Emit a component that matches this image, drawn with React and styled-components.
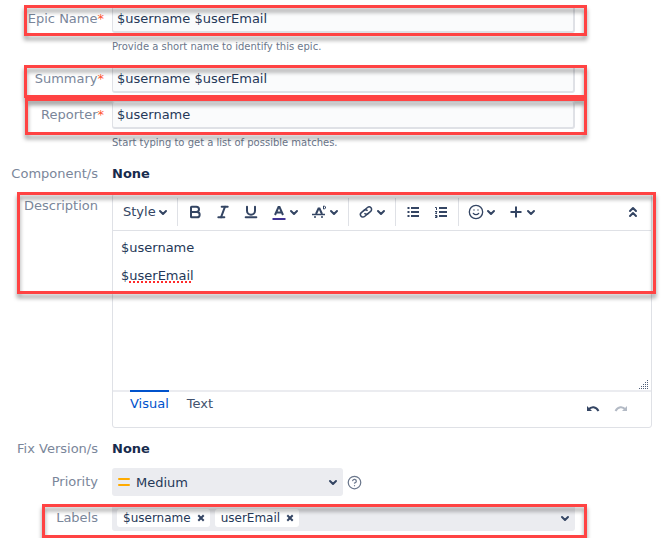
import React, { useState } from 'react';
import styled, { createGlobalStyle } from 'styled-components';
import { Bold, Italic, Underline, Smile, CircleHelp } from 'lucide-react';

const GlobalStyle = createGlobalStyle`
  * {
    box-sizing: border-box;
  }

  body {
    margin: 0;
    background: #fff;
    color: #253858;
    font-family: "DejaVu Sans", sans-serif;
    font-size: 13px;
  }

  button, input, select {
    font: inherit;
    color: inherit;
  }
`;

const Form = styled.form`
  display: flex;
  flex-direction: column;
  gap: 8px;
  padding: 5px 0 6px;
`;

const Row = styled.div`
  position: relative;
  display: grid;
  grid-template-columns: 98px minmax(0, 1fr);
  column-gap: 14px;
  padding-right: 13px;
`;

const Label = styled.label`
  padding-top: ${(props) => (props.$short ? '2px' : '0')};
  color: #7a869a;
  line-height: ${(props) => (props.$short ? '22px' : '28px')};
  text-align: right;
  white-space: nowrap;
`;

const Required = styled.span`
  margin-right: -6px;
  color: #ff5630;
`;

const Field = styled.div`
  display: flex;
  flex-direction: column;
  max-width: ${(props) => (props.$wide ? 'none' : '463px')};
`;

const TextInput = styled.input`
  width: 100%;
  height: 28px;
  padding: 0 4px;
  border: 1px solid #dfe1e6;
  border-bottom-width: 2px;
  border-right-width: 2px;
  border-radius: 3px;
  background: #fafbfc;
  outline: none;
`;

const Hint = styled.p`
  margin: 4px 0 0;
  color: #6b778c;
  font-size: 10px;
  line-height: 20px;
`;

const Value = styled.strong`
  padding-top: 2px;
  color: #172b4d;
  line-height: 22px;
`;

// Red frame that calls out a field
const Highlight = styled.div`
  position: absolute;
  top: ${(props) => props.$top}px;
  bottom: ${(props) => props.$bottom}px;
  left: ${(props) => props.$left}px;
  width: ${(props) => props.$width}px;
  border: 3px solid #ff4343;
  filter: drop-shadow(0 4px 2px rgba(0, 0, 0, 0.4));
  pointer-events: none;
`;

const Editor = styled.div`
  display: flex;
  flex-direction: column;
  width: 100%;
  border: 1px solid #dfe1e6;
  border-radius: 3px;
`;

const Toolbar = styled.div`
  display: flex;
  align-items: center;
  height: 37px;
  padding: 0 4px;
  border-bottom: 1px solid #dfe1e6;
  color: #344563;
`;

const ToolButton = styled.button`
  display: flex;
  align-items: center;
  gap: 2px;
  height: 28px;
  padding: 0 6px;
  border: 0;
  background: none;
  line-height: 28px;
`;

const CollapseButton = styled(ToolButton)`
  margin-left: auto;
`;

const Divider = styled.span`
  width: 1px;
  height: 28px;
  margin: 0 3px;
  background: #dfe1e6;
`;

const Content = styled.div`
  position: relative;
  height: 161px;
  padding: 8px;
  border-bottom: 2px solid #ebecf0;
  outline: none;
`;

const Paragraph = styled.p`
  margin: 0 0 10px;
  line-height: 18px;
`;

const Misspelled = styled.span`
  text-decoration-line: underline;
  text-decoration-style: dotted;
  text-decoration-color: #ff2b2b;
  text-decoration-thickness: 2px;
  text-underline-offset: 1px;
`;

const Grip = styled.svg`
  position: absolute;
  right: 2px;
  bottom: 1px;
`;

const Footer = styled.div`
  display: flex;
  align-items: flex-start;
  gap: 18px;
  height: 35px;
  padding: 0 17px;
`;

const Tab = styled.button`
  position: relative;
  height: 26px;
  margin-top: -2px;
  padding: 0;
  border: 0;
  border-top: 2px solid ${(props) => (props.$active ? '#0052cc' : 'transparent')};
  background: none;
  color: ${(props) => (props.$active ? '#0052cc' : '#42526e')};
  line-height: 24px;
`;

const History = styled.div`
  display: flex;
  gap: 14px;
  margin-left: auto;
  padding: 10px 6px 0 0;
`;

const IconButton = styled.button`
  display: flex;
  padding: 0;
  border: 0;
  background: none;
  color: ${(props) => (props.disabled ? '#b3bac5' : '#344563')};
`;

const PriorityLine = styled.div`
  display: flex;
  align-items: center;
  gap: 4px;
`;

const SelectBox = styled.div`
  position: relative;
  flex: 0 1 231px;
`;

const Select = styled.select`
  display: block;
  width: 100%;
  height: 28px;
  padding: 0 24px;
  border: 0;
  border-radius: 3px;
  background: #ebecf0;
  appearance: none;
`;

const PriorityMark = styled.svg`
  position: absolute;
  top: 8px;
  left: 6px;
  pointer-events: none;
`;

const SelectArrow = styled.span`
  position: absolute;
  top: 9px;
  right: 5px;
  display: flex;
  pointer-events: none;
`;

const HelpLink = styled.a`
  display: flex;
  color: #6b778c;
`;

const LabelPicker = styled.div`
  display: flex;
  align-items: center;
  gap: 5px;
  height: 27px;
  padding: 0 5px;
  border-radius: 3px;
  background: #ebecf0;
`;

const Tag = styled.span`
  display: flex;
  align-items: center;
  gap: 6px;
  height: 18px;
  padding: 0 5px 0 6px;
  border-radius: 3px;
  background: #fff;
  font-size: 12px;
  line-height: 18px;
`;

const TagInput = styled.input`
  flex: 1;
  min-width: 0;
  border: 0;
  background: none;
  outline: none;
`;

const Chevron = () => (
  <svg width="10" height="10" viewBox="0 0 10 10" fill="none" stroke="#344563" strokeWidth="2" strokeLinecap="round" strokeLinejoin="round">
    <path d="M2 4l3 3 3-3" />
  </svg>
);

const TextColorIcon = () => (
  <svg width="16" height="16" viewBox="0 0 16 16" fill="none" stroke="currentColor" strokeWidth="2">
    <path d="M4 11L7.5 3h1L12 11M5.5 8.5h5" />
    <path d="M1.5 15h13" stroke="#403294" />
  </svg>
);

const ClearFormatIcon = () => (
  <svg width="16" height="16" viewBox="0 0 16 16" fill="none" stroke="currentColor">
    <path d="M5 10L7.5 4.5h1L11 10" strokeWidth="2" />
    <path d="M1 10.5h13" strokeWidth="1.5" />
    <path d="M3 13h2M10 13h2" strokeWidth="1.5" />
    <path d="M12.5 2h1l1 1v1l-1 1h-1z" />
  </svg>
);

const LinkIcon = () => (
  <svg width="16" height="16" viewBox="0 0 16 16" fill="none" stroke="currentColor" strokeWidth="1.5">
    <g transform="rotate(-40 8 8)">
      <path d="M9.5 10.5H4a2.5 2.5 0 0 1 0-5h3.5a2.5 2.5 0 0 1 2.5 2.5" />
      <path d="M6.5 5.5H12a2.5 2.5 0 0 1 0 5H8.5A2.5 2.5 0 0 1 6 8" />
    </g>
  </svg>
);

const BulletListIcon = () => (
  <svg width="16" height="16" viewBox="0 0 16 16" stroke="currentColor" strokeWidth="2">
    <path d="M2.5 4h2M2.5 8h2M2.5 12h2M6 4h8M6 8h8M6 12h8" />
  </svg>
);

const NumberListIcon = () => (
  <svg width="16" height="16" viewBox="0 0 16 16" fill="none" stroke="currentColor">
    <path d="M6 4h8M6 8h8M6 12h8" strokeWidth="2" />
    <path d="M2 3.5h1.5V6M2 7.5h2L2.5 9.5H4M2 11.5h2v2H2M2.5 12.5H4" />
  </svg>
);

const PlusIcon = () => (
  <svg width="16" height="16" viewBox="0 0 16 16" stroke="currentColor" strokeWidth="2">
    <path d="M8 2.5v11M2.5 8h11" />
  </svg>
);

const CollapseIcon = () => (
  <svg width="16" height="16" viewBox="0 0 16 16" fill="none" stroke="currentColor" strokeWidth="2" strokeLinecap="round" strokeLinejoin="round">
    <path d="M5 7l3-3 3 3M5 12l3-3 3 3" />
  </svg>
);

const UndoIcon = () => (
  <svg width="14" height="14" viewBox="0 0 14 14" fill="none" stroke="currentColor">
    <path d="M2.5 7.5C5.5 4 10 4.5 12.5 9" strokeWidth="2" />
    <path d="M1 4v5h5z" fill="currentColor" stroke="none" />
  </svg>
);

const RedoIcon = () => (
  <svg width="14" height="14" viewBox="0 0 14 14" fill="none" stroke="currentColor">
    <path d="M11.5 7.5C8.5 4 4 4.5 1.5 9" strokeWidth="2" />
    <path d="M13 4v5H8z" fill="currentColor" stroke="none" />
  </svg>
);

const CrossIcon = () => (
  <svg width="8" height="8" viewBox="0 0 8 8" stroke="currentColor" strokeWidth="2">
    <path d="M2 2l4 4M6 2l-4 4" strokeLinecap="square" />
  </svg>
);

const TextField = ({ id, label, value, hint, frame }) => (
  <Row>
    <Label htmlFor={id}>{label}<Required>*</Required></Label>
    <Field>
      <TextInput id={id} defaultValue={value} spellCheck={false} />
      {hint && <Hint>{hint}</Hint>}
    </Field>
    <Highlight {...frame} />
  </Row>
);

const App = () => {
  const [tab, setTab] = useState('Visual');
  const [labels, setLabels] = useState(['$username', 'userEmail']);

  return (
    <>
      <GlobalStyle />
      <Form onSubmit={(e) => e.preventDefault()}>
        <TextField
          id="epic-name"
          label="Epic Name"
          value="$username $userEmail"
          hint="Provide a short name to identify this epic."
          frame={{ $top: 0, $bottom: 21, $left: 24, $width: 563 }}
        />
        <TextField
          id="summary"
          label="Summary"
          value="$username $userEmail"
          frame={{ $top: 0, $bottom: -5, $left: 24, $width: 563 }}
        />
        <TextField
          id="reporter"
          label="Reporter"
          value="$username"
          hint="Start typing to get a list of possible matches."
          frame={{ $top: -3, $bottom: 18, $left: 25, $width: 562 }}
        />

        <Row>
          <Label as="span" $short>Component/s</Label>
          <Value>None</Value>
        </Row>

        <Row>
          <Label as="span" id="description-label" $short>Description</Label>
          <Field $wide>
            <Editor>
              <Toolbar>
                <ToolButton type="button">Style<Chevron /></ToolButton>
                <Divider />
                <ToolButton type="button" aria-label="Bold"><Bold size={16} strokeWidth={3} /></ToolButton>
                <ToolButton type="button" aria-label="Italic"><Italic size={16} strokeWidth={3} /></ToolButton>
                <ToolButton type="button" aria-label="Underline"><Underline size={16} strokeWidth={3} /></ToolButton>
                <ToolButton type="button" aria-label="Text color"><TextColorIcon /><Chevron /></ToolButton>
                <ToolButton type="button" aria-label="More formatting"><ClearFormatIcon /><Chevron /></ToolButton>
                <Divider />
                <ToolButton type="button" aria-label="Link"><LinkIcon /><Chevron /></ToolButton>
                <Divider />
                <ToolButton type="button" aria-label="Bullet list"><BulletListIcon /></ToolButton>
                <ToolButton type="button" aria-label="Numbered list"><NumberListIcon /></ToolButton>
                <Divider />
                <ToolButton type="button" aria-label="Emoji"><Smile size={16} /><Chevron /></ToolButton>
                <ToolButton type="button" aria-label="Insert"><PlusIcon /><Chevron /></ToolButton>
                <CollapseButton type="button" aria-label="Collapse toolbar"><CollapseIcon /></CollapseButton>
              </Toolbar>
              <Content role="textbox" aria-multiline="true" aria-labelledby="description-label" tabIndex={0}>
                <Paragraph>$username</Paragraph>
                <Paragraph>$<Misspelled>userEmail</Misspelled></Paragraph>
                <Grip width="10" height="10" viewBox="0 0 10 10" stroke="#505f79" strokeDasharray="1 1">
                  <path d="M8 1.5h2M6 3.5h4M4 5.5h6M2 7.5h8M0 9.5h10" />
                </Grip>
              </Content>
              <Footer>
                {['Visual', 'Text'].map((name) => (
                  <Tab key={name} type="button" $active={tab === name} onClick={() => setTab(name)}>{name}</Tab>
                ))}
                <History>
                  <IconButton type="button" aria-label="Undo"><UndoIcon /></IconButton>
                  <IconButton type="button" aria-label="Redo" disabled><RedoIcon /></IconButton>
                </History>
              </Footer>
            </Editor>
          </Field>
          <Highlight $top={-1} $bottom={134} $left={17} $width={639} />
        </Row>

        <Row>
          <Label as="span" $short>Fix Version/s</Label>
          <Value>None</Value>
        </Row>

        <Row>
          <Label htmlFor="priority">Priority</Label>
          <PriorityLine>
            <SelectBox>
              <Select id="priority" defaultValue="Medium">
                <option>High</option>
                <option>Medium</option>
                <option>Low</option>
              </Select>
              <PriorityMark width="12" height="12" viewBox="0 0 12 12" stroke="#ffab00" strokeWidth="2" strokeLinecap="round">
                <path d="M1 3h10M1 9h10" />
              </PriorityMark>
              <SelectArrow><Chevron /></SelectArrow>
            </SelectBox>
            <HelpLink href="#priority-help" aria-label="Priority help"><CircleHelp size={15} /></HelpLink>
          </PriorityLine>
        </Row>

        <Row>
          <Label htmlFor="labels">Labels</Label>
          <Field>
            <LabelPicker>
              {labels.map((name) => (
                <Tag key={name}>
                  {name}
                  <IconButton type="button" aria-label={`Remove ${name}`} onClick={() => setLabels(labels.filter((l) => l !== name))}>
                    <CrossIcon />
                  </IconButton>
                </Tag>
              ))}
              <TagInput id="labels" />
              <Chevron />
            </LabelPicker>
          </Field>
          <Highlight $top={0} $bottom={-6} $left={42} $width={545} />
        </Row>
      </Form>
    </>
  );
};

export default App;
